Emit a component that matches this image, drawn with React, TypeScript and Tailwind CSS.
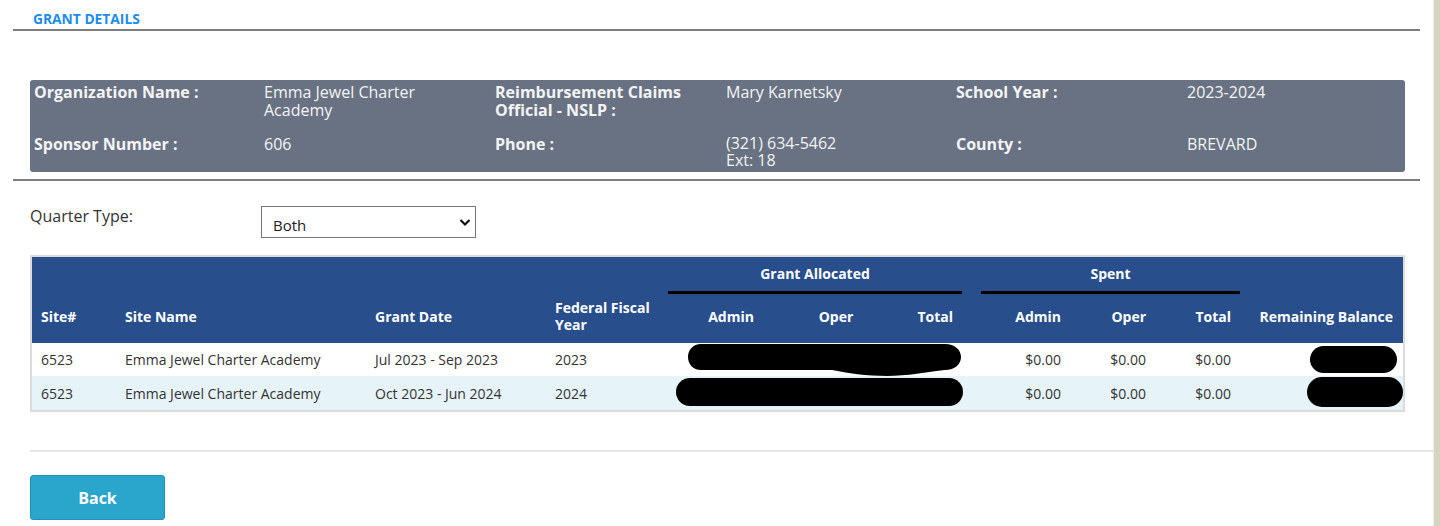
import React from 'react';

const font = { fontFamily: '"Open Sans", "Noto Sans", sans-serif' };

const InfoLabel = ({ children }: { children: React.ReactNode }) => (
  <div className="pr-[28px] font-bold text-[#f4f4f4] leading-[18px]">{children}</div>
);

const InfoValue = ({ children }: { children: React.ReactNode }) => (
  <div className="pr-[28px] text-[#f4f4f4] leading-[18px]">{children}</div>
);

const rows = [
  { site: '6523', name: 'Emma Jewel Charter Academy', date: 'Jul 2023 - Sep 2023', year: '2023', bg: 'bg-white' },
  { site: '6523', name: 'Emma Jewel Charter Academy', date: 'Oct 2023 - Jun 2024', year: '2024', bg: 'bg-[#e6f3f9]' },
];

const GrantDetailsPage: React.FC = () => {
  return (
    <div className="flex h-[526px] w-[1440px] overflow-hidden bg-white text-[14px] text-[#333]" style={font}>
      <div className="w-[1433px] shrink-0">
        <div className="pl-[33px] pt-[10px] text-[13.8px] font-bold leading-[18px] text-[#1c8cf0]">GRANT DETAILS</div>
        <div className="ml-[13px] mt-[1px] h-[2px] w-[1407px] bg-[#7d7d7d]" />

        <div className="ml-[30px] mt-[49px] grid h-[92px] w-[1375px] grid-cols-[230px_231px_231px_230px_231px_1fr] content-start gap-y-[16px] rounded-[3px] bg-[#687282] pl-[4px] pt-[3px] text-[16px]">
          <InfoLabel>Organization Name :</InfoLabel>
          <InfoValue>Emma Jewel Charter Academy</InfoValue>
          <InfoLabel>Reimbursement Claims Official - NSLP :</InfoLabel>
          <InfoValue>Mary Karnetsky</InfoValue>
          <InfoLabel>School Year :</InfoLabel>
          <InfoValue>2023-2024</InfoValue>
          <InfoLabel>Sponsor Number :</InfoLabel>
          <InfoValue>606</InfoValue>
          <InfoLabel>Phone :</InfoLabel>
          <InfoValue>
            <div className="leading-[17px]">(321) 634-5462</div>
            <div className="leading-[17px]">Ext: 18</div>
          </InfoValue>
          <InfoLabel>County :</InfoLabel>
          <InfoValue>BREVARD</InfoValue>
        </div>
        <div className="ml-[13px] mt-[7px] h-[2px] w-[1407px] bg-[#7d7d7d]" />

        <div className="mt-[25px] flex items-start pl-[30px]">
          <label className="w-[231px] text-[16px] leading-[20px] text-[#333]">Quarter Type:</label>
          <div className="relative h-[32px] w-[215px] border border-[#767676] bg-white">
            <select
              className="h-full w-full appearance-none bg-transparent pl-[11px] pt-[6px] text-[15px] text-[#222] outline-none"
              defaultValue="Both"
            >
              <option>Both</option>
              <option>Regular</option>
              <option>Summer</option>
            </select>
            <svg className="pointer-events-none absolute right-[4px] top-[10px]" width="12" height="10" viewBox="0 0 12 10">
              <path d="M1.5 3 L6 7.5 L10.5 3" fill="none" stroke="#111" strokeWidth="2.2" />
            </svg>
          </div>
        </div>

        <div className="relative ml-[30px] mt-[17px] w-[1375px] border-2 border-[#dcdcdc]">
          <table className="w-[1371px] table-fixed border-collapse text-[14px]">
            <colgroup>
              <col className="w-[84px]" />
              <col className="w-[250px]" />
              <col className="w-[180px]" />
              <col className="w-[122px]" />
              <col className="w-[126px]" />
              <col className="w-[84px]" />
              <col className="w-[84px]" />
              <col className="w-[108px]" />
              <col className="w-[85px]" />
              <col className="w-[85px]" />
              <col className="w-[163px]" />
            </colgroup>
            <thead className="bg-[#284e8b] font-bold text-white">
              <tr className="h-[40px]">
                <th colSpan={4} />
                <th colSpan={3} className="p-0 align-bottom">
                  <div className="pb-[8px] leading-[18px]">Grant Allocated</div>
                  <div className="mb-[3px] h-[3px] w-full bg-black" />
                </th>
                <th colSpan={3} className="p-0 pl-[19px] align-bottom">
                  <div className="pb-[8px] leading-[18px]">Spent</div>
                  <div className="mb-[3px] h-[3px] w-full bg-black" />
                </th>
                <th />
              </tr>
              <tr className="h-[46px] leading-[17px]">
                <th className="pb-[8px] pl-[9px] text-left">Site#</th>
                <th className="pb-[8px] pl-[9px] text-left">Site Name</th>
                <th className="pb-[8px] pl-[9px] text-left">Grant Date</th>
                <th className="pb-[8px] pl-[9px] pr-[6px] text-left">Federal Fiscal Year</th>
                <th className="pb-[8px] text-center">Admin</th>
                <th className="pb-[8px] text-center">Oper</th>
                <th className="pb-[8px] pr-[9px] text-right">Total</th>
                <th className="pb-[8px] pr-[9px] text-right">Admin</th>
                <th className="pb-[8px] pr-[9px] text-right">Oper</th>
                <th className="pb-[8px] pr-[9px] text-right">Total</th>
                <th className="pb-[8px] pr-[10px] text-right">Remaining Balance</th>
              </tr>
            </thead>
            <tbody>
              {rows.map((r, i) => (
                <tr key={i} className={`${r.bg} ${i === 0 ? 'h-[33px]' : 'h-[34px]'}`}>
                  <td className="pl-[9px]">{r.site}</td>
                  <td className="pl-[9px]">{r.name}</td>
                  <td className="pl-[9px]">{r.date}</td>
                  <td className="pl-[9px]">{r.year}</td>
                  <td />
                  <td />
                  <td />
                  <td className="pr-[9px] text-right">$0.00</td>
                  <td className="pr-[9px] text-right">$0.00</td>
                  <td className="pr-[9px] text-right">$0.00</td>
                  <td />
                </tr>
              ))}
            </tbody>
          </table>

          {/* redaction marks */}
          <svg className="absolute left-[655px] top-[86px]" width="276" height="34" viewBox="0 0 276 34">
            <path
              d="M14 1 H258 C268 1 274 7 274 14 C274 21 268 27 258 27 C240 29 220 33 200 33 C180 33 160 30 145 27 H14 C6 27 1 21 1 14 C1 7 6 1 14 1 Z"
              fill="#000"
            />
          </svg>
          <div className="absolute left-[644px] top-[121px] h-[28px] w-[287px] rounded-full bg-black" />
          <div className="absolute left-[1278px] top-[89px] h-[27px] w-[87px] rounded-full bg-black" />
          <div className="absolute left-[1275px] top-[120px] h-[30px] w-[96px] rounded-full bg-black" />
        </div>

        <div className="ml-[30px] mt-[38px] h-[2px] w-[1403px] bg-[#e6e6e6]" />

        <button className="ml-[30px] mt-[23px] h-[45px] w-[135px] rounded-[3px] border border-[#1e93ba] bg-[#2aa5cb] text-[16px] font-bold text-white">
          Back
        </button>
      </div>
      <div className="h-full w-[7px] border-l border-[#ecece2] bg-[#d5d5c3]" />
    </div>
  );
};

export default function App() {
  return <GrantDetailsPage />;
}
